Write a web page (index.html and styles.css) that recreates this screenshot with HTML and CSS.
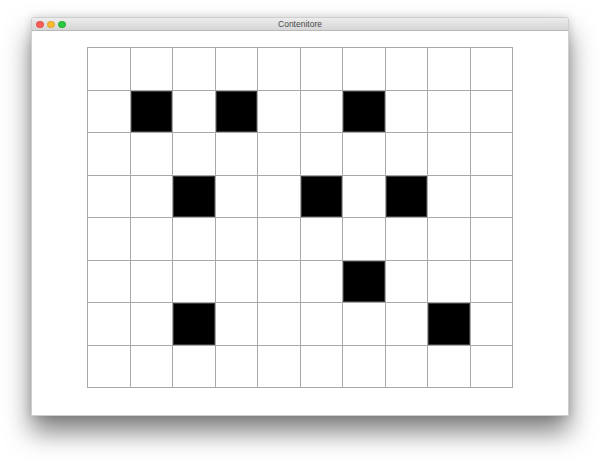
FILE: index.html
```html
<!DOCTYPE html>
<html>
<head>
<meta charset="utf-8">
<link rel="stylesheet" href="styles.css">
</head>
<body>
<div class="window">
  <div class="titlebar">
    <div class="lights">
      <span class="light red"></span>
      <span class="light yellow"></span>
      <span class="light green"></span>
    </div>
    <div class="title">Contenitore</div>
  </div>
  <div class="content">
    <div class="board">
      <div class="cell"></div><div class="cell"></div><div class="cell"></div><div class="cell"></div><div class="cell"></div><div class="cell"></div><div class="cell"></div><div class="cell"></div><div class="cell"></div><div class="cell"></div>
      <div class="cell"></div><div class="cell on"></div><div class="cell"></div><div class="cell on"></div><div class="cell"></div><div class="cell"></div><div class="cell on"></div><div class="cell"></div><div class="cell"></div><div class="cell"></div>
      <div class="cell"></div><div class="cell"></div><div class="cell"></div><div class="cell"></div><div class="cell"></div><div class="cell"></div><div class="cell"></div><div class="cell"></div><div class="cell"></div><div class="cell"></div>
      <div class="cell"></div><div class="cell"></div><div class="cell on"></div><div class="cell"></div><div class="cell"></div><div class="cell on"></div><div class="cell"></div><div class="cell on"></div><div class="cell"></div><div class="cell"></div>
      <div class="cell"></div><div class="cell"></div><div class="cell"></div><div class="cell"></div><div class="cell"></div><div class="cell"></div><div class="cell"></div><div class="cell"></div><div class="cell"></div><div class="cell"></div>
      <div class="cell"></div><div class="cell"></div><div class="cell"></div><div class="cell"></div><div class="cell"></div><div class="cell"></div><div class="cell on"></div><div class="cell"></div><div class="cell"></div><div class="cell"></div>
      <div class="cell"></div><div class="cell"></div><div class="cell on"></div><div class="cell"></div><div class="cell"></div><div class="cell"></div><div class="cell"></div><div class="cell"></div><div class="cell on"></div><div class="cell"></div>
      <div class="cell"></div><div class="cell"></div><div class="cell"></div><div class="cell"></div><div class="cell"></div><div class="cell"></div><div class="cell"></div><div class="cell"></div><div class="cell"></div><div class="cell"></div>
    </div>
  </div>
</div>
</body>
</html>
```

FILE: styles.css
```css
html, body {
  margin: 0;
  padding: 0;
  background: #ffffff;
}
body {
  box-sizing: border-box;
  min-height: 461px;
  padding: 17px 0 0 31px;
  font-family: "Liberation Sans", Arial, sans-serif;
}
.window {
  width: 538px;
  height: 399px;
  box-sizing: border-box;
  border: 1px solid #cfcfcf;
  border-radius: 3px 3px 0 0;
  background: #ffffff;
  display: flex;
  flex-direction: column;
  box-shadow: 0 16px 26px rgba(0, 0, 0, 0.5), 0 0 9px rgba(0, 0, 0, 0.14);
}
.titlebar {
  height: 12px;
  flex: none;
  position: relative;
  display: flex;
  align-items: center;
  justify-content: center;
  background: linear-gradient(#ececec, #d6d6d6);
  border-bottom: 1px solid #b9b9b9;
  border-radius: 3px 3px 0 0;
}
.lights {
  position: absolute;
  left: 4px;
  top: 2.5px;
  display: flex;
  gap: 3.5px;
}
.light {
  width: 7.5px;
  height: 7.5px;
  border-radius: 50%;
  box-sizing: border-box;
}
.red { background: #fc5f57; border: 0.5px solid #e0443e; }
.yellow { background: #fdbc2e; border: 0.5px solid #dea123; }
.green { background: #2ac940; border: 0.5px solid #1aab29; }
.title {
  font-size: 8.5px;
  color: #4a4a4a;
  line-height: 12px;
}
.content {
  flex: 1;
  padding: 16px 0 0 55px;
}
.board {
  width: 426px;
  height: 341px;
  box-sizing: border-box;
  display: grid;
  grid-template-columns: repeat(10, 1fr);
  grid-template-rows: repeat(8, 1fr);
  gap: 1px;
  padding: 1px;
  background: #a9a9a9;
}
.cell {
  background: #ffffff;
}
.cell.on {
  background: #000000;
  box-shadow: inset 0 0 0 1px #3a3a3a;
}
```
